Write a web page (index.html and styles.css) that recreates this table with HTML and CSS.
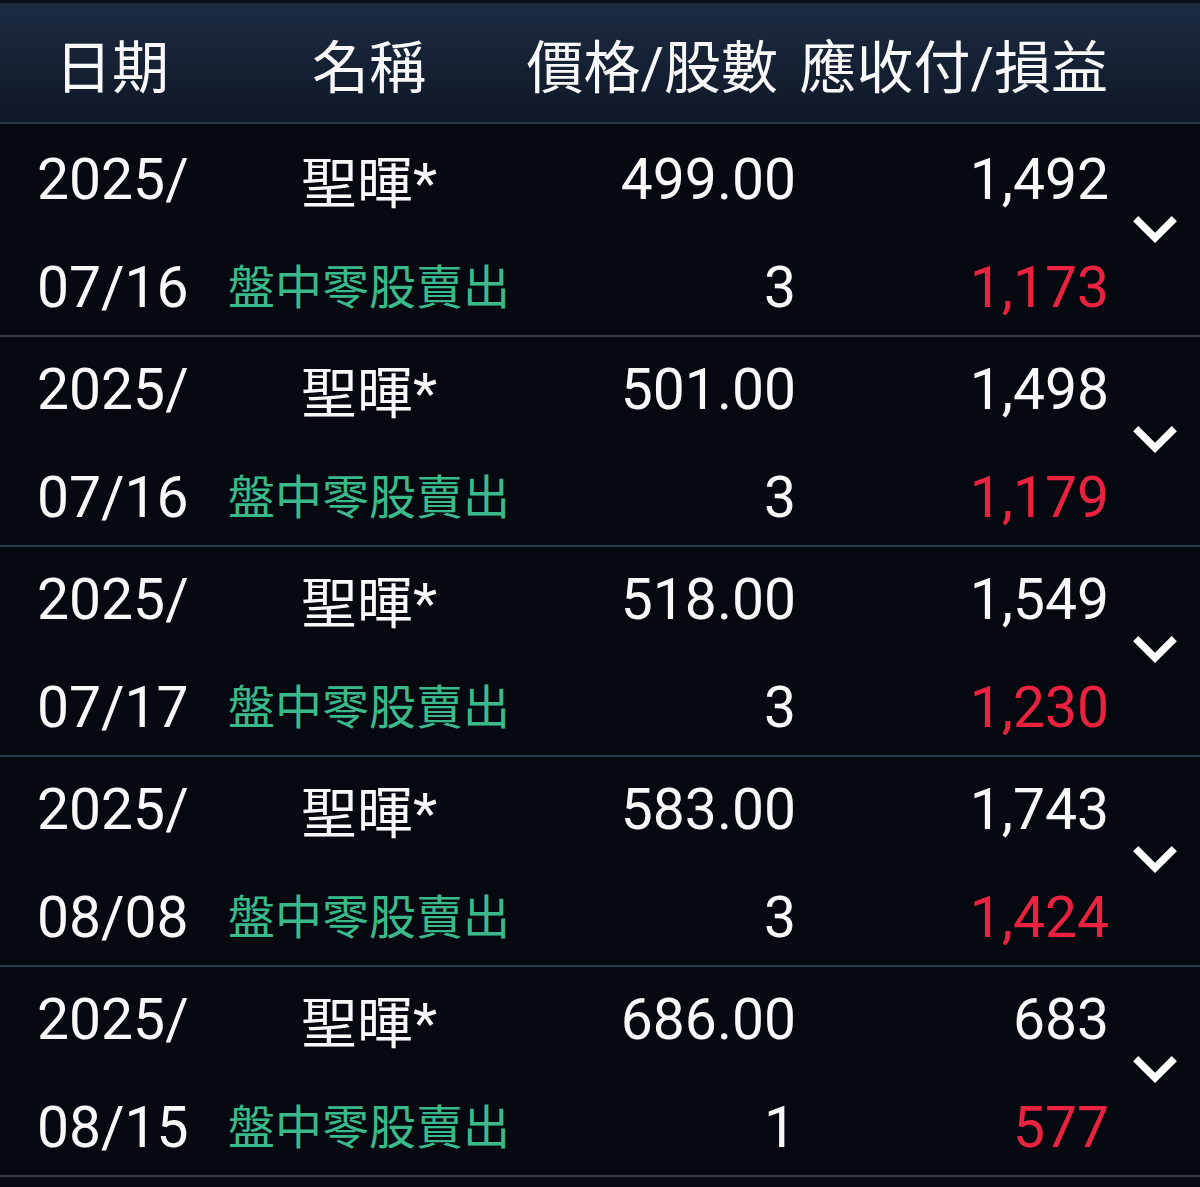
FILE: index.html
```html
<!DOCTYPE html>
<html lang="zh-Hant">
<head>
<meta charset="utf-8">
<title>交易明細</title>
<link rel="stylesheet" href="styles.css">
</head>
<body>
<div class="screen">
  <div class="topbar"></div>
  <div class="header">
    <div class="h-date">日期</div>
    <div class="h-name">名稱</div>
    <div class="h-price">價格/股數</div>
    <div class="h-amt">應收付/損益</div>
  </div>
  <div class="list">
    <div class="rec">
      <div class="date">2025/</div>
      <div class="name">聖暉*</div>
      <div class="num">499.00</div>
      <div class="num">1,492</div>
      <div class="chev"><svg width="44" height="27" viewBox="6 8.59 12 7.41"><path d="M16.59 8.59L12 13.17 7.41 8.59 6 10l6 6 6-6z" fill="#ffffff"/></svg></div>
      <div class="date">07/16</div>
      <div class="type">盤中零股賣出</div>
      <div class="num">3</div>
      <div class="num loss">1,173</div>
    </div>
    <div class="rec">
      <div class="date">2025/</div>
      <div class="name">聖暉*</div>
      <div class="num">501.00</div>
      <div class="num">1,498</div>
      <div class="chev"><svg width="44" height="27" viewBox="6 8.59 12 7.41"><path d="M16.59 8.59L12 13.17 7.41 8.59 6 10l6 6 6-6z" fill="#ffffff"/></svg></div>
      <div class="date">07/16</div>
      <div class="type">盤中零股賣出</div>
      <div class="num">3</div>
      <div class="num loss">1,179</div>
    </div>
    <div class="rec">
      <div class="date">2025/</div>
      <div class="name">聖暉*</div>
      <div class="num">518.00</div>
      <div class="num">1,549</div>
      <div class="chev"><svg width="44" height="27" viewBox="6 8.59 12 7.41"><path d="M16.59 8.59L12 13.17 7.41 8.59 6 10l6 6 6-6z" fill="#ffffff"/></svg></div>
      <div class="date">07/17</div>
      <div class="type">盤中零股賣出</div>
      <div class="num">3</div>
      <div class="num loss">1,230</div>
    </div>
    <div class="rec">
      <div class="date">2025/</div>
      <div class="name">聖暉*</div>
      <div class="num">583.00</div>
      <div class="num">1,743</div>
      <div class="chev"><svg width="44" height="27" viewBox="6 8.59 12 7.41"><path d="M16.59 8.59L12 13.17 7.41 8.59 6 10l6 6 6-6z" fill="#ffffff"/></svg></div>
      <div class="date">08/08</div>
      <div class="type">盤中零股賣出</div>
      <div class="num">3</div>
      <div class="num loss">1,424</div>
    </div>
    <div class="rec">
      <div class="date">2025/</div>
      <div class="name">聖暉*</div>
      <div class="num">686.00</div>
      <div class="num">683</div>
      <div class="chev"><svg width="44" height="27" viewBox="6 8.59 12 7.41"><path d="M16.59 8.59L12 13.17 7.41 8.59 6 10l6 6 6-6z" fill="#ffffff"/></svg></div>
      <div class="date">08/15</div>
      <div class="type">盤中零股賣出</div>
      <div class="num">1</div>
      <div class="num loss">577</div>
    </div>
  </div>
</div>
</body>
</html>
```
FILE: styles.css
```css
html, body {
  margin: 0;
  padding: 0;
  background: #070a11;
}

body {
  font-family: Roboto, "Noto Sans CJK TC", sans-serif;
  color: #f8f8f8;
}

.screen {
  width: 1200px;
  min-height: 1187px;
  background: #070a11;
}

.topbar {
  height: 3px;
  background: #0a0f1b;
}

.header {
  box-sizing: border-box;
  height: 121px;
  padding: 13px 0 0 37px;
  display: grid;
  grid-template-columns: 183px 298px 278px 313px 1fr;
  background: linear-gradient(#1c2b42, #0f1727);
  border-bottom: 2px solid #2b3949;
  font-size: 57px;
  line-height: 106px;
  white-space: nowrap;
}

.h-date {
  padding-left: 18px;
}

.h-name {
  text-align: center;
}

.h-price {
  text-align: right;
  padding-right: 18px;
}

.h-amt {
  text-align: right;
  padding-right: 1px;
}

.list {
  padding-top: 3px;
}

.rec {
  height: 198px;
  padding: 8px 0 2px 37px;
  display: grid;
  grid-template-columns: 183px 298px 278px 313px 1fr;
  grid-template-rows: 90px 90px;
  row-gap: 18px;
  border-bottom: 2px solid #2b3949;
  background: #070910;
  white-space: nowrap;
}

.date {
  font-size: 57px;
  line-height: 90px;
}

.name {
  font-size: 56px;
  line-height: 81px;
  padding-top: 9px;
  text-align: center;
}

.type {
  font-size: 47px;
  line-height: 90px;
  text-align: center;
  color: #3ab98b;
}

.num {
  font-size: 57px;
  line-height: 90px;
  text-align: right;
}

.loss {
  color: #e8223f;
}

.chev {
  grid-column: 5;
  grid-row: 1 / 3;
  display: flex;
  align-items: center;
  justify-content: center;
  padding-bottom: 9px;
}

.chev svg {
  display: block;
}
```
